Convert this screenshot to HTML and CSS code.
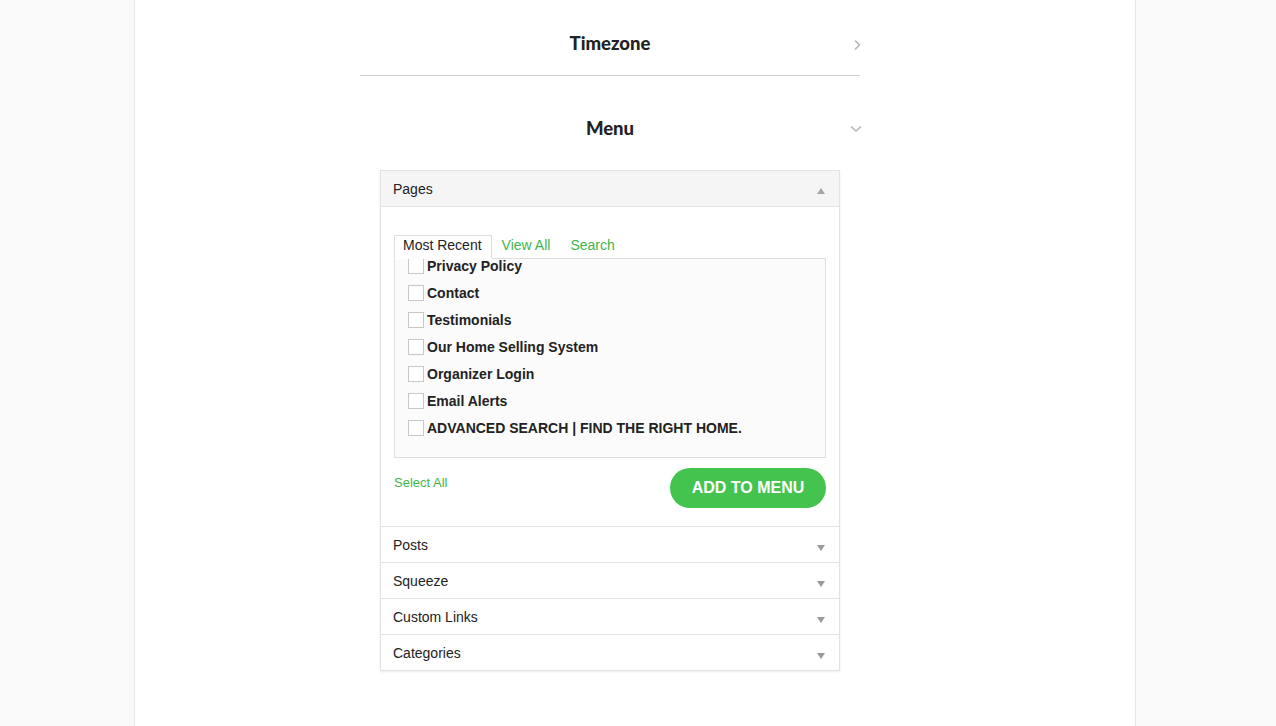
FILE: index.html
```html
<!DOCTYPE html>
<html>
<head>
<meta charset="utf-8">
<link rel="stylesheet" href="styles.css">
</head>
<body>
<div class="page">
  <div class="column">
    <div class="section-head timezone">
      <span></span>
      <h2 class="title">Timezone</h2>
      <svg class="chev" width="10" height="12" viewBox="0 0 10 12"><path d="M3 1.5 L7.5 6 L3 10.5" fill="none" stroke="#b5b5b5" stroke-width="1.6"/></svg>
    </div>
    <div class="section-head menu">
      <span></span>
      <h2 class="title">Menu</h2>
      <svg class="chev" width="12" height="10" viewBox="0 0 12 10"><path d="M1 2.5 L6 7 L11 2.5" fill="none" stroke="#b5b5b5" stroke-width="1.6"/></svg>
    </div>
    <div class="box">
      <div class="acc-head open">
        <span>Pages</span>
        <i class="tri up"></i>
      </div>
      <div class="acc-body">
        <div class="tabs">
          <span class="tab active">Most Recent</span>
          <span class="tab link">View All</span>
          <span class="tab link">Search</span>
        </div>
        <div class="list">
          <ul class="items">
            <li><span class="cb"></span>Privacy Policy</li>
            <li><span class="cb"></span>Contact</li>
            <li><span class="cb"></span>Testimonials</li>
            <li><span class="cb"></span>Our Home Selling System</li>
            <li><span class="cb"></span>Organizer Login</li>
            <li><span class="cb"></span>Email Alerts</li>
            <li><span class="cb"></span>ADVANCED SEARCH | FIND THE RIGHT HOME.</li>
          </ul>
        </div>
        <div class="actions">
          <span class="select-all">Select All</span>
          <button class="add">ADD TO MENU</button>
        </div>
      </div>
      <div class="acc-head"><span>Posts</span><i class="tri down"></i></div>
      <div class="acc-head"><span>Squeeze</span><i class="tri down"></i></div>
      <div class="acc-head"><span>Custom Links</span><i class="tri down"></i></div>
      <div class="acc-head last"><span>Categories</span><i class="tri down"></i></div>
    </div>
  </div>
</div>
</body>
</html>
```

FILE: styles.css
```css
html, body {
  margin: 0;
  padding: 0;
  background: #f9f9f9;
  font-family: "Liberation Sans", Arial, sans-serif;
  color: #222;
}
.page {
  width: 1000px;
  min-height: 726px;
  margin-left: 134px;
  background: #fff;
  border-left: 1px solid #e6e6e6;
  border-right: 1px solid #e6e6e6;
  box-sizing: content-box;
}
.column {
  width: 500px;
  margin-left: 225px;
}
.section-head {
  display: grid;
  grid-template-columns: 1fr auto 1fr;
  align-items: center;
}
.section-head .chev {
  justify-self: end;
  margin-right: -2px;
}
.title {
  margin: 0;
  font-family: Lato, "Liberation Sans", sans-serif;
  font-weight: 900;
  font-size: 18.5px;
  line-height: 24px;
  color: #222;
}
.timezone {
  padding: 31px 0 20px;
  border-bottom: 1px solid #cfcfcf;
}
.timezone .chev { margin-top: 3px; }
.menu {
  padding: 40px 0 30px;
}
.menu .chev { margin-top: 2px; }
.box {
  margin: 0 20px;
  border: 1px solid #e2e2e2;
  box-shadow: 0 1px 2px rgba(0,0,0,0.08);
  background: #fff;
}
.acc-head {
  height: 35px;
  display: flex;
  align-items: center;
  justify-content: space-between;
  padding: 0 14px 0 12px;
  font-size: 14px;
  border-bottom: 1px solid #e2e2e2;
  background: #fff;
}
.acc-head.open {
  background: #f5f5f5;
}
.acc-head.last { border-bottom: none; }
.tri {
  display: block;
  width: 0;
  height: 0;
  border-left: 4px solid transparent;
  border-right: 4px solid transparent;
}
.tri.up {
  border-bottom: 6px solid #a5a5a5;
  margin-top: 4px;
}
.tri.down {
  border-top: 6px solid #999;
  margin-top: 7px;
}
.acc-body {
  padding: 28px 13px 18px 13px;
  border-bottom: 1px solid #e2e2e2;
}
.tabs {
  display: flex;
  align-items: flex-end;
  height: 23px;
  font-size: 14px;
  position: relative;
  z-index: 1;
}
.tab {
  line-height: 19px;
  padding: 0 9px 3px 8px;
}
.tab.active {
  border: 1px solid #dedede;
  border-bottom: 1px solid #fff;
  background: #fff;
  margin-bottom: -1px;
}
.tab.link {
  color: #3fb54b;
  padding: 0 10px 3px 10px;
}
.list {
  height: 198px;
  border: 1px solid #dedede;
  background: #fbfbfb;
  overflow: hidden;
}
.items {
  list-style: none;
  margin: -7px 0 0 0;
  padding: 0 0 0 13px;
}
.items li {
  height: 27px;
  display: flex;
  align-items: center;
  font-size: 14px;
  font-weight: 700;
  color: #222;
}
.cb {
  width: 14px;
  height: 14px;
  border: 1px solid #c8c8c8;
  background: #fff;
  margin-right: 3px;
  flex: none;
}
.actions {
  display: flex;
  justify-content: space-between;
  align-items: flex-start;
  margin-top: 10px;
}
.select-all {
  color: #3fb54b;
  font-size: 13px;
  margin-top: 7px;
}
.add {
  width: 156px;
  height: 40px;
  border: none;
  border-radius: 20px;
  background: #45c34f;
  color: #fff;
  font-family: "Liberation Sans", Arial, sans-serif;
  font-weight: 700;
  font-size: 16px;
  padding: 0;
}
```
